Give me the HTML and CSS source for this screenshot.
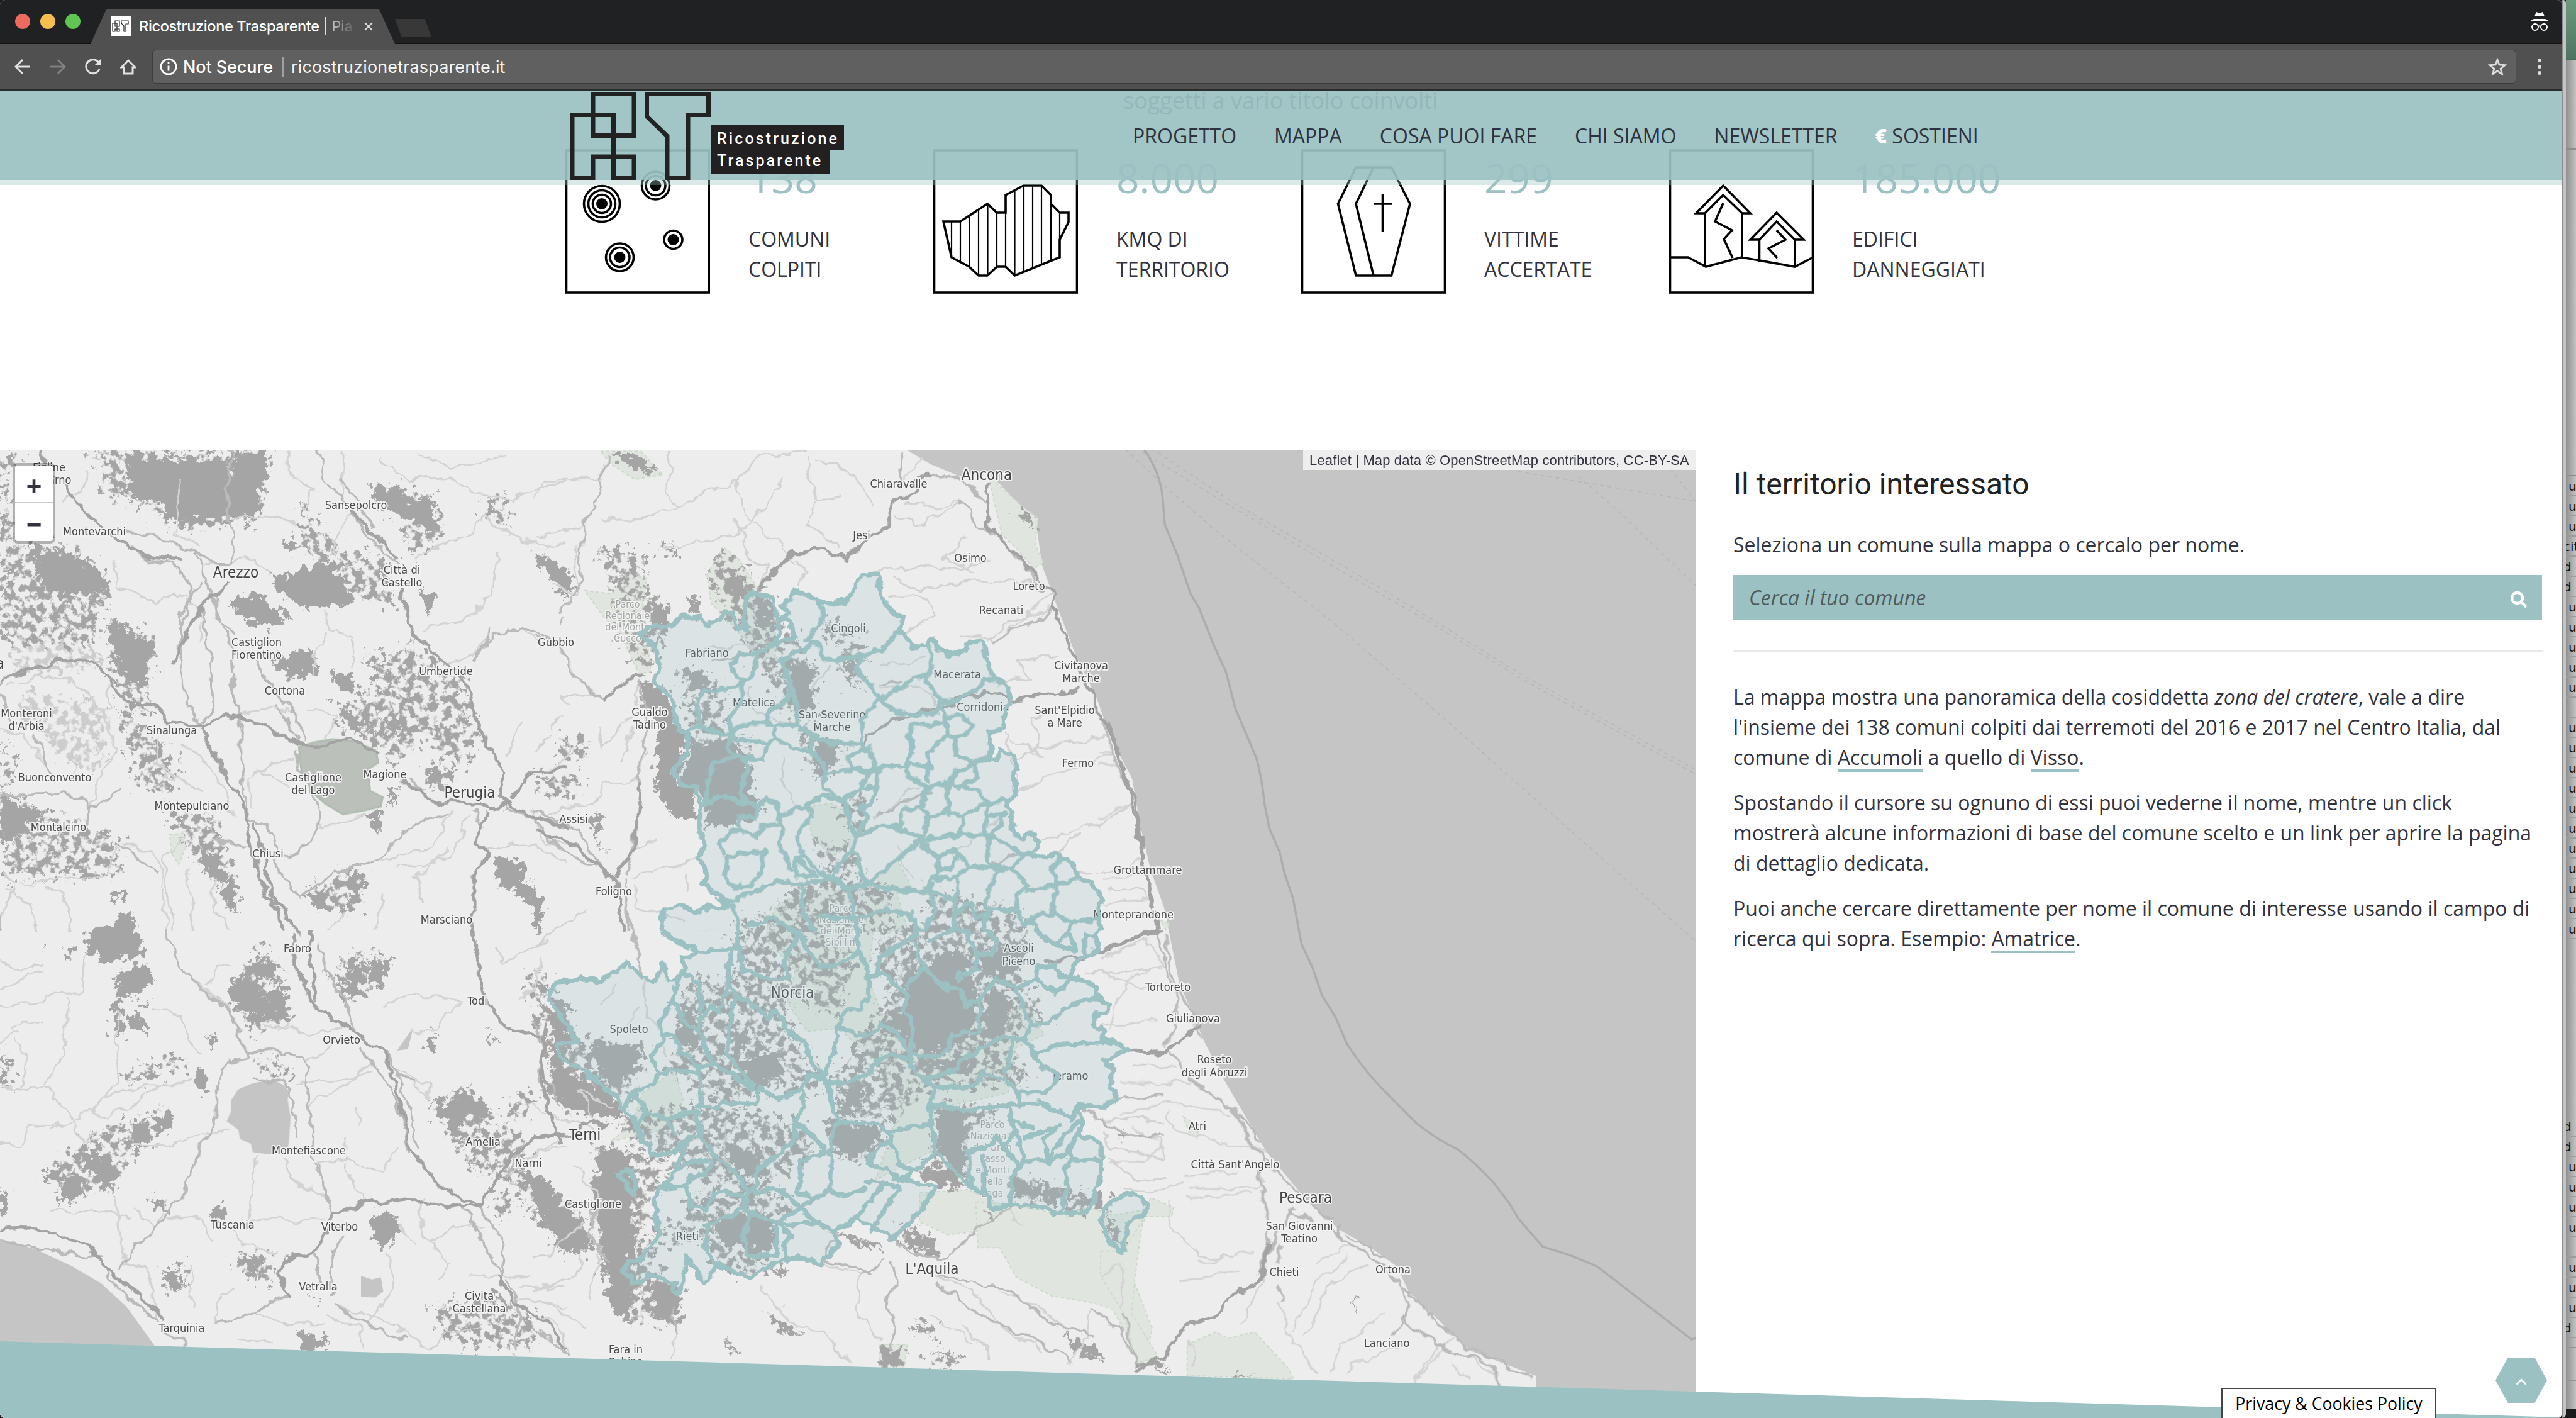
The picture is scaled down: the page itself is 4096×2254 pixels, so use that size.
FILE: index.html
```html
<!DOCTYPE html>
<html lang="it">
<head>
<meta charset="utf-8">
<title>Ricostruzione Trasparente</title>
<link rel="stylesheet" href="styles.css">
</head>
<body>
<div class="desktop">
<div class="window">
  <div class="tabbar">
    <div class="lights"><i class="red"></i><i class="yellow"></i><i class="green"></i></div>
    <div class="tab">
      <svg class="tab-shape" viewBox="0 0 484 56"><path d="M0 56L24 3Q26 0 30 0H454Q458 0 460 3L484 56Z"/></svg>
      <svg class="favicon" viewBox="0 0 32 32"><rect width="32" height="32" fill="#fff"/><path d="M7 7h7v9H7zM3 11h7v13h4v-4H7v4H3zM17 7h11v5h-4v12h-3v-9l-4-4z" fill="none" stroke="#222" stroke-width="1.2"/></svg>
      <span class="tab-title">Ricostruzione Trasparente <b>| Pia</b></span>
      <svg class="tab-close" viewBox="0 0 16 16"><path d="M2 2L14 14M14 2L2 14"/></svg>
    </div>
    <div class="newtab"></div>
    <svg class="incognito" viewBox="0 0 32 30"><path d="M8 7L11 0l5 2 5-2 3 7zM0 15l7-4h18l7 4z" fill="#fff"/><g fill="none" stroke="#fff" stroke-width="2"><circle cx="9" cy="24" r="5"/><circle cx="23" cy="24" r="5"/><path d="M14 23q2-1.500 4 0"/></g></svg>
  </div>
  <div class="toolbar">
    <svg class="ico back" viewBox="0 0 26 26"><path d="M25 13H2M13 2L2 13l11 11"/></svg>
    <svg class="ico fwd" viewBox="0 0 26 26"><path d="M1 13h23M13 2l11 11-11 11"/></svg>
    <svg class="ico reload" viewBox="0 0 26 26"><path d="M22 6.500A11 11 0 1 0 23 17"/><path class="solid" d="M26 0v11H15z"/></svg>
    <svg class="ico home" viewBox="0 0 26 26"><path d="M13 3L2 14h4v10h14V14h4z"/></svg>
    <div class="omnibox">
      <svg class="info" viewBox="0 0 28 28"><circle cx="14" cy="14" r="12"/><path d="M14 12.500v8M14 7v3"/></svg>
      <span class="notsecure">Not Secure</span><span class="sep"></span><span class="url">ricostruzionetrasparente.it</span>
      <svg class="star" viewBox="0 0 30 28"><path d="M15 3l3 8 9 .6-7 5.600 2.500 8.600-7.500-5-7.500 5L10 17.200 3 11.600l9-.6z"/></svg>
    </div>
    <div class="menu"><i></i><i></i><i></i></div>
  </div>
  <div class="viewport">
    <p class="lead">soggetti a vario titolo coinvolti</p>
    <div class="stats">
      <div class="stat">
        <svg viewBox="0 0 230 230"><rect x="1.500" y="2" width="227" height="226"/>
          <circle cx="58" cy="87" r="28.500"/><circle cx="58" cy="87" r="21.500"/><circle cx="58" cy="87" r="14.500"/><circle class="dot" cx="58" cy="87" r="9"/>
          <circle cx="143.500" cy="58" r="22"/><circle cx="143.500" cy="58" r="15.500"/><circle class="dot" cx="143.500" cy="58" r="9"/>
          <circle cx="171.500" cy="144" r="14.500"/><circle class="dot" cx="171.500" cy="144" r="9"/>
          <circle cx="86.500" cy="172" r="22"/><circle cx="86.500" cy="172" r="15.500"/><circle class="dot" cx="86.500" cy="172" r="9"/></svg>
        <div><div class="num">138</div><div class="cap">COMUNI<br>COLPITI</div></div>
      </div>
      <div class="stat">
        <svg viewBox="0 0 230 230"><defs><clipPath id="area"><path d="M16 115H43L86 87 101 101H115V73L143.500 58H172L187 73V87L201 101H215V116L201 144V172L129.500 201 115 187H101L86 201H72L57 187 29 172Z"/></clipPath></defs><rect x="1.500" y="2" width="227" height="226"/>
          <path clip-path="url(#area)" stroke-width="2.200" d="M29 50V210M43 50V210M57.600 50V210M72 50V210M86.500 50V210M101 50V210M115 50V210M129.500 50V210M144 50V210M158 50V210M172 50V210M187 50V210M201 50V210"/>
          <path d="M16 115H43L86 87 101 101H115V73L143.500 58H172L187 73V87L201 101H215V116L201 144V172L129.500 201 115 187H101L86 201H72L57 187 29 172Z"/></svg>
        <div><div class="num">8.000</div><div class="cap">KMQ DI<br>TERRITORIO</div></div>
      </div>
      <div class="stat">
        <svg viewBox="0 0 230 230"><rect x="1.500" y="2" width="227" height="226"/><path d="M87 29H143.500L173 87 143.500 201H87L58.500 87ZM115 29L87 87 115 201M129.500 72V131M115 87H144"/></svg>
        <div><div class="num">299</div><div class="cap">VITTIME<br>ACCERTATE</div></div>
      </div>
      <div class="stat">
        <svg viewBox="0 0 230 230"><rect x="1.500" y="2" width="227" height="226"/><path d="M0 172H30L58.500 187 115 172 200 187 229 172M86 58L129 102H116L86 73 57 102H43ZM57 102V187M116 102V172M86 86L73 115 100 129 87 143 101 173M171 101L214 144H200L171 115 143.500 144H129ZM143.500 144V179M200 144V187M171 129L185 144 158 158 172 173"/></svg>
        <div><div class="num">185.000</div><div class="cap">EDIFICI<br>DANNEGGIATI</div></div>
      </div>
    </div>

    <div class="maprow">
      <div class="mapbox">
      <svg class="map" viewBox="0 716 2696 1538">
        <defs>
          <filter id="rough" filterUnits="userSpaceOnUse" x="0" y="716" width="2696" height="1538" color-interpolation-filters="sRGB"><feTurbulence type="fractalNoise" baseFrequency=".035" numOctaves="3" seed="4"/><feDisplacementMap in="SourceGraphic" scale="22" xChannelSelector="R" yChannelSelector="G"/></filter>
          <filter id="jag" filterUnits="userSpaceOnUse" x="0" y="716" width="2696" height="1538" color-interpolation-filters="sRGB"><feTurbulence type="fractalNoise" baseFrequency=".08" numOctaves="4" seed="9" result="n"/><feDisplacementMap in="SourceGraphic" in2="n" scale="36" xChannelSelector="R" yChannelSelector="G"/></filter>
          <filter id="speck" filterUnits="userSpaceOnUse" x="0" y="716" width="2696" height="1538" color-interpolation-filters="sRGB"><feTurbulence type="fractalNoise" baseFrequency=".085" numOctaves="4" seed="21" result="n"/><feColorMatrix in="n" type="matrix" values="0 0 0 0 0  0 0 0 0 0  0 0 0 0 0  9 0 0 0 -4.050" result="m"/><feDisplacementMap in="SourceGraphic" in2="n" scale="60" xChannelSelector="G" yChannelSelector="B" result="d"/><feComposite in="d" in2="m" operator="in"/></filter>
          <filter id="bound" filterUnits="userSpaceOnUse" x="0" y="716" width="2696" height="1538" color-interpolation-filters="sRGB"><feTurbulence type="fractalNoise" baseFrequency=".07" numOctaves="2" seed="7"/><feDisplacementMap in="SourceGraphic" scale="13" xChannelSelector="R" yChannelSelector="G"/></filter>
        </defs>
        <rect class="land" x="0" y="716" width="2696" height="1538"/>
        <g class="sea">
          <path d="M1443 716L1480 738 1526 757 1571 750 1609 790 1647 829 1657 899 1679 959 1711 1043 1743 1108 1768 1177 1800 1237 1813 1312 1829 1381 1851 1443 1875 1562 1915 1656 1946 1716 2013 1830 2074 1904 2130 1955 2179 1983 2221 2013 2240 2053 2286 2097 2338 2147 2442 2187 2445 2254H2696V716Z"/>
          <path d="M0 1969L57 1986 115 2013 161 2040 201 2077 230 2117 250 2145V2200H0Z"/>
        </g>
        <g class="offshore" transform="translate(1750 700) scale(.6122 .9911)">
          <path class="limit" d="M110 12Q150 45 160 85L167 135 200 185 233 245 255 268 295 330 325 370 350 430 405 510Q420 545 425 580L438 622 465 660 478 695 500 735 522 808 550 845 575 890 610 925 640 968Q690 1015 740 1045L820 1095Q870 1120 930 1138 975 1160 1020 1190L1060 1222 1085 1248 1148 1293 1220 1307 1290 1325 1535 1442 1546 1440"/>
          <path d="M65 15L170 75 300 145 600 290 900 450 1100 560 1545 803M90 12L350 110 640 215 850 290 1100 385 1545 535M150 20L350 102 640 205 850 283 1100 378 1545 528M1085 50L1300 72 1546 98M1240 58L1330 105 1546 233M1480 45L1546 98"/>
        </g>

        <g class="parks">
          <g transform="translate(850 700) scale(.6378 .4974)"><path d="M1130 110L1180 170 1215 210 1255 250 1248 330 1268 390 1245 410 1205 350 1165 300 1150 220ZM125 480L190 490 235 430 280 440 270 520 290 740 260 745 215 620 170 560ZM165 35H265L320 110 250 125 190 75ZM430 430L470 340 510 380 560 480 600 560 600 700 560 690 500 600 440 520ZM680 1170L740 1160 780 1190 800 1290 740 1330 690 1260ZM850 1400L905 1340 940 1430 880 1440ZM670 1440L900 1430 930 1568H580L600 1490Z"/></g>
          <g transform="translate(850 1450) scale(.6378 .5128)"><path d="M580 10H850L830 200 870 330 1230 300 1270 380 1200 420 1180 560 1000 610 990 740 850 830 900 650 860 480 760 360 680 370 630 280 650 180 580 90ZM1100 900L1190 905 1300 935 1385 915 1440 940 1530 920 1480 1100 1540 1290 1520 1400 1440 1230 1390 1210 1290 1190 1200 1130 1160 1040 1105 1040ZM960 870L1080 860 1170 910 1100 990 1030 1000 960 960ZM270 560L350 490 370 580 340 670 190 710 240 660ZM860 1340L930 1340 920 1420 860 1410Z"/></g>
          <g transform="translate(1750 700) scale(.6122 .9911)"><path d="M0 1300L60 1300 110 1250 130 1215 190 1230 185 1245 110 1245 90 1340 80 1400 150 1470 95 1480 60 1400 0 1340ZM225 1450L300 1430 330 1440 400 1430 490 1490 500 1505 225 1500ZM215 1085L255 1100 250 1120 230 1110ZM155 770L180 775 170 785Z"/></g>
          <g transform="translate(0 700) scale(.574 .4974)"><path d="M470 1260L510 1255 515 1300 495 1355 475 1320Z"/></g>
        </g>

        <g class="woods speckled">
          <g transform="translate(0 700) scale(.574 .4974)"><path d="M0 40L60 60 20 110 40 330 150 330 230 370 300 440 300 500 270 600 240 660 100 650 0 640ZM250 30H750L720 250 520 290 380 200 300 180ZM300 560L440 640 410 760 420 880 350 850 310 740ZM830 170L860 240 950 360 1060 370 1100 520 1000 520 830 330ZM1030 140L1110 150 1200 180 1230 300 1140 370 1110 250 1040 220ZM1340 190L1400 180 1420 280 1350 230ZM1010 690L1100 680 1130 640 1200 700 1280 770 1330 960 1270 1060 1180 950 1100 1030 940 900 930 840 1060 780 1030 740ZM0 950L60 1040 0 1130ZM0 1130L130 1190 330 1270 330 1390 20 1400ZM330 850L480 1000 480 1150 380 1100ZM460 1190L600 1200 660 1500 580 1400ZM840 1450L950 1370 1015 1380 990 1510 900 1500ZM1180 1040L1250 1060 1220 1120 1180 1100Z"/><path class="faint" d="M60 800L280 850 300 1000 240 1080 160 1000 50 860ZM40 640L240 660 300 720 40 740Z"/></g>
          <g transform="translate(0 1480) scale(.574 .4936)"><path d="M640 180L720 50 770 120 800 280 690 340ZM950 90L1020 70 1080 100 1060 160 970 210 910 160ZM190 710L280 640 460 580 400 690 320 800 210 860 120 800ZM1190 560L1290 500 1380 620 1470 700 1450 780 1560 900 1560 1040 1500 950 1440 830 1300 760 1240 650ZM1450 130L1540 170 1568 300 1568 600 1500 350ZM1200 1210L1380 1170 1490 1250 1480 1340 1230 1330ZM700 410L800 430 800 470 700 430ZM450 1090L520 1070 510 1160 460 1150ZM640 1050L750 1040 750 1150 690 1110ZM0 380L40 420 30 520 0 480ZM1370 830L1440 860 1400 930 1350 890ZM1420 520L1490 540 1460 600 1410 600ZM340 470L380 430 500 400 520 430 360 490Z"/></g>
          <g transform="translate(850 700) scale(.6378 .4974)"><path d="M150 350L285 350 270 480 330 520 330 600 280 740 200 620 190 450ZM430 420L470 340 560 480 700 720 690 880 720 1010 760 980 760 1040 690 1080 660 900 600 800 500 600ZM730 550L820 660 810 790 770 760 770 660 720 600ZM355 720L450 760 480 930 540 990 550 1040 380 1000 380 800ZM320 330L355 330 350 370 325 360ZM60 960L140 960 120 1020 60 1010ZM0 1060L120 1080 90 1150 10 1120ZM760 1150L840 1130 830 1240 790 1260ZM680 1280L790 1300 820 1390 760 1400 720 1360ZM670 1400L890 1430 870 1568H560L600 1490ZM970 1430L1200 1500 1180 1568H990Z"/></g>
          <g transform="translate(850 1450) scale(.6378 .5128)"><path d="M580 0L720 0 800 160 760 330 620 240 660 420 720 520 700 560 560 550 480 620 420 560 320 480 380 420 350 300 400 200 500 200 490 50ZM860 40L1240 20 1200 160 1270 340 1180 400 1240 540 1060 540 960 560 900 650 760 640 740 520 820 380 880 250 850 150ZM10 180L120 400 280 430 240 560 200 640 130 620 40 550 60 450 30 330ZM200 620L420 600 560 620 660 650 700 750 560 850 440 840 300 740 230 700ZM150 720L270 740 350 780 300 870 270 1000 330 1150 360 1270 240 1270 180 1130 150 900ZM0 830L90 900 140 1040 90 1060 0 900ZM380 870L560 840 660 900 560 980 600 1060 540 1130 440 1080 420 1000 290 1050 240 1140 260 1090 300 980 380 950ZM750 650L880 660 860 740 800 780 740 730ZM1000 600L1180 600 1080 700 1090 850 970 820 1000 740ZM900 970L960 980 1000 1060 940 1050ZM1180 820L1440 890 1410 930 1200 890ZM980 1350L1060 1380 1030 1420 980 1400ZM950 1270L1010 1280 990 1320 950 1300Z"/></g>
        </g>
        <g class="woods" filter="url(#jag)">
          <g transform="translate(0 700) scale(.574 .4974)"><path d="M350 60L600 60 640 100 650 40 735 35 745 120 720 130 710 250 660 240 560 250 500 270 430 190 360 190ZM80 340L230 380 300 450 270 500 130 490ZM290 580L430 650 400 740 410 800 350 760 320 700ZM750 440L790 430 850 400 920 380 930 430 980 490 960 530 850 540 780 490ZM780 320L820 320 800 370ZM630 510L720 490 800 570 740 600 660 570ZM750 700L830 670 885 690 870 750 800 760ZM1030 150L1110 150 1120 200 1200 180 1200 240 1230 300 1150 270 1050 200ZM1480 370L1568 440V510ZM920 740L985 760 980 810 925 780ZM945 860L1000 900 1050 940 960 910ZM1065 880L1105 900 1100 960ZM1160 470L1210 500 1190 560ZM1185 1050L1250 1060 1230 1110 1185 1100ZM1365 1330L1465 1350 1440 1400 1500 1450 1505 1520 1430 1450 1370 1400ZM0 1140L130 1190 60 1250 10 1290ZM560 1270L600 1340 655 1440 655 1515 620 1470 620 1410 560 1370ZM840 1450L920 1440 880 1500ZM960 1380L1010 1390 980 1490ZM1010 1190L1050 1180 1050 1270ZM250 1568L370 1510 380 1568ZM310 1450L355 1440 350 1480ZM1080 1120L1110 1100 1080 1170Z"/></g>
          <g transform="translate(0 1480) scale(.574 .4936)"><path d="M240 0H380L400 70 290 105 240 60ZM325 130L400 110 430 150 380 210 325 210ZM375 230L420 230 390 245ZM360 270L400 280 405 330 365 310ZM310 230L330 220 345 330 315 340ZM680 110L720 90 765 110 760 155 700 150ZM635 170L690 150 740 230 760 180 800 195 800 280 725 280 690 340 700 270 640 240ZM920 140L970 190 960 110 1000 130 1020 70 1010 150 1000 200 965 220ZM1020 95L1080 100 1060 165 1025 155ZM1180 350L1205 320 1210 390 1180 385ZM535 460L565 445 585 520 545 510ZM570 345L595 340 590 380ZM370 620L420 620 415 695 370 690ZM430 600L480 590 475 630 430 655ZM200 715L250 700 330 770 305 840ZM130 770L190 780 240 830 225 855 160 875 180 810 125 800ZM415 850L465 880 460 915 420 880ZM585 900L615 880 630 920 585 930ZM0 820L20 840 20 890 0 920ZM1190 550L1250 560 1285 500 1355 570 1360 610 1290 570 1270 680 1230 600ZM1530 250L1568 220V570L1530 510ZM1440 770L1520 800 1568 900V1040L1500 920ZM1030 910L1090 910 1105 990 1060 1020 1035 970ZM460 1100L500 1100 500 1160 470 1150ZM665 1050L730 1060 700 1120ZM850 1290L910 1320 900 1350 850 1350 820 1300ZM845 1170L885 1180 870 1200ZM110 40L130 45 120 65ZM175 60L205 60 200 100ZM1345 320L1380 350 1350 360Z"/></g>
          <g transform="translate(850 700) scale(.6378 .4974)"><path d="M10 350L90 430 100 490 40 440 5 370ZM290 510L330 520 330 610 290 600ZM265 760L330 800 350 900 380 940 375 1020 350 1060 360 1100 400 1110 410 1210 350 1210 300 1110 310 920 270 850ZM390 970L490 970 540 1040 545 1130 575 1170 540 1210 430 1240 420 1130 360 1100ZM620 700L690 730 690 860 650 880 640 760ZM700 950L760 960 750 1050 700 1080ZM770 690L810 720 790 780ZM380 490L415 510 415 570 385 540ZM720 570L755 650 730 630ZM140 1190L180 1200 155 1240 160 1290 185 1320 140 1250ZM190 40L250 40 310 110 240 90ZM1205 220L1245 250 1240 280 1200 240ZM810 1430L890 1440 860 1460ZM0 1400L20 1568H0ZM360 730L430 740 430 800 390 790ZM470 400L510 430 540 520 500 500ZM560 500L590 520 590 580 560 620Z"/></g>
          <g transform="translate(850 1450) scale(.6378 .5128)"><path d="M30 310L80 350 100 410 50 410ZM50 500L130 510 190 560 215 635 90 620 45 560ZM140 400L270 410 250 500 190 530 140 450ZM160 740L230 740 250 900 240 1270 190 1230 170 1090 150 860ZM290 1140L370 1160 360 1270 300 1260ZM30 930L120 940 140 1040 80 1060ZM930 190L1060 110 1100 210 1100 380 980 450 930 400 920 250ZM880 300L940 310 940 400 880 360ZM1130 240L1190 270 1170 380 1110 410ZM960 450L1090 450 1080 500 970 480ZM1010 610L1080 610 1070 740 1080 840 1000 740ZM960 790L1050 790 1060 860 970 840ZM720 650L850 660 870 710 790 760 740 730ZM480 460L600 440 620 500 560 540ZM460 720L560 740 560 830 500 800ZM450 940L570 930 600 1000 590 1050 530 1050 450 1000ZM1180 820L1230 840 1420 890 1430 930 1380 890 1200 880ZM1420 960L1460 990 1465 1040ZM750 990L860 1030 870 1050 760 1010ZM905 990L1000 1010 1000 1060 940 1040ZM1115 930L1145 930 1140 955ZM865 1350L920 1350 910 1410 865 1410ZM950 1275L1000 1290 1000 1315 950 1295ZM985 1360L1060 1380 1050 1395ZM1310 1305L1405 1350 1410 1395 1350 1360ZM570 1240L670 1310 620 1300ZM470 1320L520 1380 490 1370ZM580 1100L630 1110 620 1135ZM370 310L410 310 400 420 340 400ZM480 380L540 360 520 440ZM1100 120L1230 110 1200 190 1120 200ZM770 550L830 540 810 600 760 620Z"/></g>
          <g transform="translate(1750 700) scale(.6122 .9911)"><path d="M10 1235L40 1260 50 1290 20 1275ZM130 1483L180 1495 150 1497ZM340 1495L400 1502 350 1502ZM40 1112L70 1110 60 1118ZM655 1380L670 1375 660 1395Z"/></g>
        </g>
        <g class="lakes">
          <path transform="translate(0 1480) scale(.574 .4936)" d="M700 490L730 483 760 482 785 495 800 515 797 545 805 600 800 680 795 712 740 718 700 712 695 685 665 670 660 640 628 612 640 580 640 545 660 510Z"/>
          <path transform="translate(0 1480) scale(.574 .4936)" d="M1145 310L1130 380 1100 385 1120 350ZM1000 1110L1030 1122 1055 1115 1062 1160 1040 1180 1000 1178Z"/>
          <path class="trasimeno" transform="translate(0 700) scale(.574 .4974)" d="M828 980L870 965 920 955 975 960 1040 990 1048 1030 1020 1050 1025 1120 1060 1140 1055 1170 1000 1185 950 1195 900 1160 870 1130 835 1060Z"/>
        </g>

        <g class="roads" filter="url(#rough)">
          <g class="minor">
            <g transform="translate(0 700) scale(.574 .4974)"><path d="M170 200L230 160 240 100M500 120L480 300 560 330M640 250L720 240 820 260M800 30L800 110 870 160 850 220M940 30L960 100 940 180M980 240L920 320 930 370M1050 60L1130 130 1260 120 1300 170 1420 180 1568 130M1160 40L1250 90 1400 40M1300 300L1340 240 1400 300 1520 340 1568 320M1150 380L1220 330 1300 300M1380 360L1350 530 1250 580 1170 600M900 540L910 610 970 620 980 720M900 620L870 700 860 760M1360 600L1320 680 1230 720M1440 600L1500 660M320 380L330 470 430 510 520 490M520 500L560 560 550 640M560 400L700 380 750 430M20 790L100 750 200 770 260 830 300 900 320 1000 270 1080 240 1200M0 920L60 940 130 1050M310 750L300 850 260 880M500 970L560 1010 620 1120 650 1200M440 960L430 1040 480 1080M660 880L760 850 820 880M700 1180L680 1080 820 1010M560 1120L480 1060 420 1040M720 1060L800 1100M340 1290L430 1310 450 1400 460 1568M330 1300L300 1390 180 1400 40 1420 0 1380M580 1270L640 1290 700 1300M500 1280L450 1340 480 1568M880 1190L890 1240 960 1210 1010 1190M1100 1080L1180 1140 1240 1160M1250 1180L1200 1300 1060 1340M1300 1190L1250 1330 1100 1370M1480 1180L1500 1280 1568 1290M1340 1310L1480 1290 1568 1350M1170 1480L1150 1400 1240 1300M0 1520L40 1430M100 1568L80 1480 20 1440M200 1568L180 1450 130 1430M850 860L930 880 900 950M1400 1000L1450 900M1550 880L1480 1000M600 1400L590 1500 640 1568M520 1370L540 1568M1040 1568L1060 1450M900 1568L960 1510"/></g>
            <g transform="translate(0 1480) scale(.574 .4936)"><path d="M0 100L60 130 120 100M0 240L100 230 130 200 220 210 240 60M0 190L120 120M40 320L60 290 120 290M320 250L330 480 250 580M420 250L510 280 520 350 550 400M570 180L600 120 640 110M510 140L560 180 630 250 690 400M0 360L60 320M60 500L70 400 40 350M0 500L130 510 200 600M120 500L180 400 190 220M280 540L400 490 530 490M130 640L250 580 300 610 440 490M0 690L60 690 80 640 160 620M200 610L230 680 280 640M320 850L330 1000 350 1060M150 910L260 900 360 930M370 900L430 960 460 860M460 920L560 930 590 1000M690 930L820 930 900 920M650 970L670 1010 770 1040M710 720L700 840 680 930M370 690L480 690 560 660M600 650L560 660 640 640M780 310L800 300M730 310L780 300 850 330 950 310M860 560L870 540 960 500 1030 420M880 750L960 740 1060 780 1100 700M960 660L960 740M780 740L830 820 900 850M1010 870L980 830 960 750M1180 860L1160 920 1190 1000 1240 1080 1210 1120M1190 1000L1260 940 1340 960M1110 940L1150 1020M1150 480L1190 550 1190 490 1080 440M1000 620L980 560M840 420L900 400 920 370M820 490L960 480 1030 450M1280 230L1200 320 1140 320M1060 240L1120 210 1220 210 1280 230M1400 800L1500 700 1568 690M1400 1110L1460 1110M1440 1190L1568 1210M1300 1110L1400 1110M1190 1350L1240 1290 1330 1280M1010 1350L1000 1280 900 1230M930 1200L1100 1280 1190 1350M1070 1040L1090 1120 1060 1200 1020 1260M670 1310L760 1320M600 1260L610 1170 660 1140M530 1210L530 1080M350 1070L400 1080 430 1180 440 1280M700 1230L800 1270 900 1270M1430 1140L1568 1150M1380 60L1400 100 1520 20M1500 90L1480 180 1440 220"/></g>
            <g transform="translate(850 700) scale(.6378 .4974)"><path d="M0 310L80 290 130 260M170 120L30 130 0 190M340 40L330 160 360 210M160 250L240 260 350 220 420 180 500 130 560 50 680 35M500 130L530 250 600 320 650 400M620 120L560 230 500 300 330 350M680 50L700 190 680 270 760 350M700 60L800 110 840 210M760 180L700 190M960 60L920 140M920 190L1000 220 1060 190M1060 200L960 270 900 240M850 420L940 400 1060 410 1130 390M900 440L960 480 1040 460 1110 450 1240 450M880 500L960 500 1000 560 930 610M1100 420L1020 380 1080 310M1120 640L1180 580 1290 540M1290 490L1150 640 1060 620M1150 780L1240 760 1200 700 1310 690M1170 930L1260 1010 1240 890 1300 870M1200 1010L1300 980 1430 940M1180 930L1200 1130 1290 1070 1440 1000M1260 1280L1400 1230 1500 1150M1300 1320L1360 1260M1350 1380L1460 1370 1520 1340M1430 1440L1500 1430 1540 1480M40 470L80 480 110 500 100 400 110 330M60 670L110 760 170 830M80 850L60 820 150 800M160 920L170 990 240 880 260 780M220 1030L240 920M0 1060L60 1040 90 980 60 960M0 1210L70 1180 150 1160 170 1100 260 1080 280 990M310 1280L250 1300M250 1400L380 1350 420 1300M250 1410L260 1500 380 1540M380 1380L380 1450M400 680L500 650 560 660M540 780L540 860 620 900M620 1010L620 1100 660 1180M860 800L960 780 1030 880M960 1100L880 1180 850 1200M860 720L930 710 980 690M740 720L690 800M570 450L590 400 540 380 500 250M650 460L680 420 650 380M1040 1320L1090 1290 1160 1190M900 1290L940 1400"/></g>
            <g transform="translate(850 1450) scale(.6378 .5128)"><path d="M0 100L50 50 130 0M1500 100L1440 130 1380 110M1380 180L1450 190 1568 170M1450 270L1430 370M1400 640L1500 640 1568 650M1420 670L1440 730 1568 760M1430 760L1500 830 1568 830M0 600L60 640 160 680M140 650L120 560 200 600M0 740L60 710M0 1070L60 1040 120 960M0 1170L100 1130 110 1060M0 1210L60 1230 130 1280M0 1250L60 1280 90 1380M350 1270L340 1390M560 1160L640 1270 720 1300 780 1390M810 1120L800 1250 860 1320M720 1090L810 1120M1000 1130L1100 1180 1170 1290 1260 1360M1170 1180L1240 1210 1330 1290M1380 1230L1380 1320 1330 1400M1220 980L1180 930M1060 1280L1130 1340 1130 1400M980 1250L1100 1330M160 280L210 230M270 200L280 320 310 360 330 450M230 350L260 300M480 640L480 800M100 780L150 870 150 960M170 1040L130 1200"/></g>
            <g transform="translate(1750 700) scale(.6122 .9911)"><path d="M0 500L30 500M0 520L60 520M0 605L80 580M0 705L100 690M10 745L130 735M0 830L120 800 160 840 60 870 0 850M40 905L70 870 150 880M0 940L150 930M80 1000L200 1010M50 1030L230 1030M60 1080L200 1060 340 1080M20 1060L100 1055M170 1080L210 1110 350 1130 430 1140M20 1160L120 1150 160 1130M80 1100L160 1130 165 1150M40 1200L130 1210 210 1190M180 1220L180 1260 260 1310 350 1310M0 1340L60 1320 60 1390M260 1320L390 1300M210 1350L360 1330M220 1180L360 1170M240 1200L410 1200M220 1215L400 1210M420 1190L410 1160M460 1380L500 1440 540 1480 560 1500M500 1430L560 1350 640 1310M530 1440L600 1350 690 1320M600 1500L620 1450 740 1400M640 1490L780 1450M810 1510L880 1450M820 1505L910 1440M910 1480L960 1510M960 1470L1040 1510M230 1440L240 1490M360 1420L420 1340M640 1290L560 1320"/></g>
          </g>
          <g class="mid">
            <g transform="translate(0 700) scale(.574 .4974)"><path d="M350 290L450 320 530 350 600 390 640 390 650 340 630 260 640 30M360 330L400 380 480 390 530 480 500 620 480 720M540 350L570 440 610 570 640 650 650 850 670 920 670 1100 680 1200 760 1250 770 1330M560 450L500 550 500 680 520 850 560 920M600 500L600 560 650 620M560 540L580 720 590 850 560 910M710 700L720 740 790 830 850 960M770 840L830 970M1550 590L1568 560M1568 650L1440 600 1370 620 1310 700M1360 600L1340 660M980 240L1060 360 1110 400M880 30L900 120 980 230M950 130L1040 280M1400 1180L1568 1230M240 1180L340 1110M0 1130L180 1130 240 1160 240 1240M0 1520V1568M780 1330L830 1320 880 1240 880 1190 860 1120 830 1050 825 990M1240 1190L1110 1250 1060 1330 940 1380 830 1460 790 1400 760 1340M1140 1080L1180 1150M1310 1180L1340 1240M150 1100L90 940M680 1300L590 1270M430 1380L330 1290M10 750L0 800 20 900"/></g>
            <g transform="translate(0 1480) scale(.574 .4936)"><path d="M460 0L500 120 560 190 640 270 690 410 640 420 600 520 600 600 560 690 500 840 430 960 370 1030 340 1090M690 400L760 380 840 410 850 480 860 600 870 740M700 470L790 490 810 540 820 660M1000 370L1090 520 1130 720M1070 390L1110 480 1160 700M870 750L930 910M880 750L900 850 930 900M950 980L920 1050 920 1170M880 1040L880 1130M800 1170L740 1200 690 1240 600 1260M1330 180L1400 320M970 220L950 230 980 320M890 40L900 130 940 190 980 320M1280 890L1390 1110M1320 880L1400 1010 1390 1110M1370 960L1330 900M1450 690L1400 800M0 1000L100 1020 180 1040 280 1050M290 1080L300 1120 430 1250 480 1310 510 1330M930 1200L1000 1260 1130 1320M1400 1120L1440 1200M1440 1210L1420 1340M1500 330L1510 480 1550 560M1150 480L1100 470"/></g>
            <g transform="translate(850 700) scale(.6378 .4974)"><path d="M185 60L160 120 165 170 130 250 110 390 120 460 60 550M0 630L60 650 80 720 170 830M910 30L920 130M990 100L1080 140 1130 200M1060 190L1090 250 1150 310M1160 310L1230 410 1270 490M440 700L520 680M860 790L920 770M260 760L280 900 260 1080 250 1250 230 1390M0 1180L110 1250 170 1370M0 1210L60 1300 160 1370M225 1400L230 1568M1140 1350L1200 1330M860 1190L990 1120M1300 540L1140 640"/></g>
            <g transform="translate(850 1450) scale(.6378 .5128)"><path d="M0 340L20 420 10 520 60 700M230 0L250 110 265 200M850 1110L720 1080 750 990M880 1080L810 1120M880 990L930 1060 1020 1070 1050 1030 1190 920M890 1080L900 1150 880 1200 900 1260 890 1350M1010 1150L1100 1240 1200 1300 1340 1390M1010 1130L1180 1170 1290 1270 1400 1310M1380 1220L1460 1300 1500 1400M350 1220L350 1300M0 1290L60 1350 90 1380M150 900L140 1000 180 1080M1360 600L1440 660 1470 690 1568 700M1440 580L1568 570"/></g>
            <g transform="translate(1750 700) scale(.6122 .9911)"><path d="M0 450L30 500 80 570 100 620 120 700 150 790 170 850 200 890 190 940 170 970M170 790L180 850 230 910 260 960M180 975L240 1030 350 1075 380 1120 440 1160 500 1200 600 1250M350 1075L420 1130M420 1150L410 1180 430 1240 440 1280 420 1340M430 1310L470 1260 510 1230M440 1310L460 1270M460 1320L460 1290M620 1260L620 1280 700 1310 780 1350 800 1390 790 1410 870 1450 1010 1480 1040 1515M640 1275L740 1310M790 1360L870 1415 940 1450 1120 1505M470 1380L460 1350M500 1240L580 1260 620 1280M90 1480L60 1400M760 1440L790 1400"/></g>
          </g>
          <g class="major">
            <g transform="translate(0 700) scale(.574 .4974)"><path d="M115 30L130 80 250 240 320 310 360 340 400 370 500 380M640 450L560 530 500 650 480 720M0 770L60 740 150 710 240 690 300 750 360 850 420 840 470 900 560 920 620 880 700 900 830 970 870 975 970 960 1050 1000M560 920L600 1020 650 1120 680 1200 690 1290 750 1480 790 1568M700 1220L730 1320 760 1480 830 1568M1110 470L1130 590 1200 680 1280 760 1320 880 1350 980 1400 1060 1380 1140 1410 1170 1568 1240M1410 1150L1480 1060 1568 1045M1240 1160L1410 1170M1110 1080L1190 1150 1240 1160M1350 1180L1320 1280 1350 1330 1310 1400 1310 1568M1100 380L980 230"/></g>
            <g transform="translate(0 1480) scale(.574 .4936)"><path d="M810 0L820 100 860 230 960 310 1070 400 1100 520 1130 700 1170 760 1260 850 1330 880 1400 760 1440 710 1500 660 1568 650M860 0L860 60 870 230M1310 0L1330 100 1330 180 1400 310 1500 340M1510 340L1500 500 1530 610 1550 680M1330 880L1240 890 1130 860 1000 880 930 910 870 1040 790 1060 780 1110 800 1180M0 960L130 960 230 1010 290 1080 370 1160 460 1250M1380 1110L1430 1200 1520 1270 1568 1350"/></g>
            <g transform="translate(850 700) scale(.6378 .4974)"><path d="M990 100L940 160 900 190 880 260 840 310 780 375 720 355 650 355 560 470M1130 130L1130 280 1200 360 1290 490 1300 560 1370 770 1420 900 1460 1020 1500 1150 1520 1350 1550 1568M1360 790L1200 830 1130 800 1080 820 990 860 900 890 830 940 820 990M0 1240L100 1290 200 1410 220 1568M170 830L230 770 270 740M200 1400L250 1300 260 1090"/></g>
            <g transform="translate(850 1450) scale(.6378 .5128)"><path d="M1568 50L1440 110 1350 150 1270 160M1568 430L1480 425M110 690L130 650 180 660M0 700L110 690M1568 1400L1500 1400M30 340L20 420 30 560"/></g>
            <g transform="translate(1750 700) scale(.6122 .9911)"><path d="M0 818L80 800 150 785M20 450L80 575 115 680 150 780M60 978L175 975 260 940M90 1490L160 1470 220 1420 300 1405 350 1370 430 1335 440 1290"/></g>
          </g>
        </g>
        <g class="labels">
          <text x="78" y="749">Figline</text><text x="78" y="769">Valdarno</text><text x="566" y="809">Sansepolcro</text><text x="150" y="851">Montevarchi</text><text class="city" x="375" y="918">Arezzo</text>
          <text x="639" y="912">Città di</text><text x="639" y="932">Castello</text><text x="408" y="1027">Castiglion</text><text x="408" y="1047">Fiorentino</text><text x="453" y="1104">Cortona</text><text x="709" y="1073">Umbertide</text>
          <text x="42" y="1140">Monteroni</text><text x="42" y="1160">d'Arbia</text><text x="273" y="1167">Sinalunga</text><text x="87" y="1242">Buonconvento</text><text x="498" y="1242">Castiglione</text><text x="498" y="1262">del Lago</text><text x="612" y="1237">Magione</text><text class="city" x="747" y="1268">Perugia</text>
          <text x="305" y="1287">Montepulciano</text><text x="93" y="1321">Montalcino</text><text x="426" y="1363">Chiusi</text><text x="710" y="1468">Marsciano</text><text class="city" x="0" y="1063">a</text>
          <text x="473" y="1514">Fabro</text><text x="759" y="1597">Todi</text><text x="543" y="1659">Orvieto</text><text x="768" y="1821">Amelia</text><text x="840" y="1855">Narni</text><text x="491" y="1835">Montefiascone</text><text x="370" y="1953">Tuscania</text><text x="540" y="1956">Viterbo</text><text x="506" y="2051">Vetralla</text><text x="762" y="2066">Civita</text><text x="762" y="2086">Castellana</text><text x="289" y="2117">Tarquinia</text>
          <text x="1429" y="775">Chiaravalle</text><text class="city" x="1569" y="763">Ancona</text><text x="1370" y="857">Jesi</text><text x="1543" y="893">Osimo</text><text x="1636" y="938">Loreto</text><text x="1592" y="976">Recanati</text><text x="1349" y="1005">Cingoli</text><text x="1719" y="1064">Civitanova</text><text x="1719" y="1084">Marche</text><text x="1522" y="1078">Macerata</text><text x="1563" y="1130">Corridonia</text><text x="1693" y="1135">Sant'Elpidio</text><text x="1693" y="1155">a Mare</text><text x="1714" y="1219">Fermo</text>
          <text x="1124" y="1044">Fabriano</text><text x="1199" y="1123">Matelica</text><text x="1323" y="1142">San Severino</text><text x="1323" y="1162">Marche</text><text x="1033" y="1138">Gualdo</text><text x="1033" y="1158">Tadino</text><text x="884" y="1027">Gubbio</text><text x="912" y="1308">Assisi</text><text x="976" y="1423">Foligno</text>
          <text x="1825" y="1389">Grottammare</text><text x="1802" y="1460">Monteprandone</text><text x="1857" y="1575">Tortoreto</text><text x="1897" y="1625">Giulianova</text><text x="1931" y="1690">Roseto</text><text x="1931" y="1711">degli Abruzzi</text><text x="1904" y="1796">Atri</text><text x="1964" y="1857">Città Sant'Angelo</text><text class="city" x="2076" y="1912">Pescara</text><text x="2066" y="1955">San Giovanni</text><text x="2066" y="1975">Teatino</text><text x="2042" y="2028">Chieti</text><text x="2215" y="2024">Ortona</text><text x="2205" y="2141">Lanciano</text>
          <text x="1620" y="1513">Ascoli</text><text x="1620" y="1534">Piceno</text><text class="city" x="1260" y="1586">Norcia</text><text x="1000" y="1642">Spoleto</text><text x="1701" y="1716">Teramo</text><text class="city" x="930" y="1812">Terni</text><text x="943" y="1920">Castiglione</text><text x="1093" y="1971">Rieti</text><text class="city" x="1482" y="2025">L'Aquila</text><text x="995" y="2151">Fara in</text><text x="995" y="2171">Sabina</text>
          <g class="park"><text x="998" y="966">Parco</text><text x="998" y="984">Regionale</text><text x="998" y="1002">del Monte</text><text x="998" y="1020">Cucco</text><text x="1338" y="1449">Parco</text><text x="1338" y="1467">Nazionale</text><text x="1338" y="1485">dei Monti</text><text x="1338" y="1503">Sibillini</text><text x="1578" y="1793">Parco</text><text x="1578" y="1811">Nazionale</text><text x="1578" y="1829">del Gran</text><text x="1578" y="1847">Sasso</text><text x="1578" y="1865">e Monti</text><text x="1578" y="1883">della</text><text x="1578" y="1902">Laga</text></g>
        </g>

        <g class="comuni" filter="url(#bound)">
          <g class="area">
            <path transform="translate(850 700) scale(.6378 .4974)" d="M320 1568L315 1535 325 1500 365 1485 400 1505 440 1490 455 1500 480 1490 470 1465 420 1420 430 1390 410 1330 425 1290 410 1240 415 1165 400 1105 360 1100 345 1060 378 1000 382 935 360 925 350 880 340 820 298 778 312 730 305 670 262 617 297 592 340 595 368 557 385 570 415 565 428 600 440 578 465 570 475 548 495 555 505 600 530 605 520 570 530 500 545 488 595 505 605 560 610 600 600 650 648 630 635 575 618 570 632 550 618 525 640 505 645 478 680 492 715 520 778 515 795 480 815 430 858 425 862 490 890 545 918 565 910 605 945 660 980 655 990 632 1010 670 1040 685 1070 675 1085 642 1112 642 1125 665 1125 690 1145 760 1175 785 1192 825 1172 860 1168 925 1135 930 1138 985 1130 1020 1155 1020 1160 990 1198 1010 1203 1050 1195 1060 1200 1110 1195 1135 1180 1160 1190 1215 1195 1250 1215 1280 1225 1262 1243 1260 1258 1280 1245 1310 1220 1325 1270 1330 1300 1320 1340 1350 1355 1395 1390 1415 1405 1450 1418 1475 1405 1500 1412 1540 1410 1568"/>
            <path transform="translate(850 1450) scale(.6378 .5128)" d="M1410 58L1395 70 1408 120 1350 150 1340 200 1400 230 1402 262 1435 290 1425 310 1393 320 1395 355 1418 362 1420 400 1440 398 1480 427 1420 462 1443 485 1432 540 1455 580 1418 605 1355 600 1365 655 1362 690 1412 712 1415 790 1390 915 1375 930 1300 935 1260 915 1185 905 1170 915 1135 915 1135 885 1085 850 1045 800 1000 745 960 790 915 830 960 840 1003 850 975 905 930 970 885 1015 880 1000 800 950 745 990 758 1030 712 1090 655 1070 620 1080 590 1095 535 1133 490 1110 455 1100 425 1150 405 1120 380 1065 372 1130 360 1185 345 1175 350 1150 285 1125 248 1150 222 1110 235 1085 265 1075 310 1000 298 905 310 855 325 850 350 800 380 705 345 745 290 752 288 720 268 712 250 650 220 610 205 570 150 515 100 475 62 450 60 410 105 400 80 350 45 290 35 250 60 215 130 205 165 215 232 155 265 200 300 215 322 160 335 210 355 210 375 175 365 145 400 130 395 110 335 80 320 58"/>
            <path transform="translate(850 1450) scale(.6378 .5128)" d="M1480 870L1510 885 1532 910 1520 940 1480 960 1465 1055 1435 1020 1412 970 1415 930 1440 895ZM205 812L240 798 255 850 245 878 225 840Z"/>
          </g>
          <g class="line">
            <path transform="translate(850 700) scale(.6378 .4974)" d="M715 520L722 560 680 640 710 655 720 700 745 705 815 685 865 670 910 605M690 655L615 700 630 760 650 830 655 910 700 945 740 970 815 968M600 650L560 680 510 685 492 720 500 750 518 770 545 740 560 680M518 770L515 840 485 880 490 940M515 785L450 800 425 800 405 825 412 900 415 920 490 940M380 935L410 905M815 680L800 730 830 770 840 790 862 825 890 860 940 880 1000 870 1015 830 975 770 990 720 985 660M862 825L900 800 940 765 990 740M1015 840L1050 830 1115 785 1120 765 1150 765M862 825L815 890 818 980 835 990 850 1045M1015 850L1025 900 1030 940 1045 950 1050 1010 1090 1030 1130 1015M940 910L1015 905M940 910L930 940 945 990 925 1030 990 1045M1025 890L1060 875 1095 910 1080 935 1045 950M1030 940L980 1000 980 1090M835 980L780 1010 790 1050 825 1060 850 1045 930 1040M725 1065L790 1050M695 1000L720 1030 725 1065 720 1110 770 1150 815 1110 825 1070 860 1050 850 1110 815 1110M490 940L510 915 550 905 650 910M490 940L505 960 580 965 600 955 600 920M580 905L590 860 630 830 640 790 630 740M600 955L650 985 690 990 690 940M490 940L480 980 500 1010 525 1020 530 1060 515 1110 525 1160 560 1170 580 1140 605 1165 610 1200 690 1160 720 1135 770 1155M500 1010L445 1030 435 1080 425 1160 470 1135 525 1160M505 1010L570 1020 580 975M610 1200L620 1240 610 1290 640 1370M680 1170L690 1200 655 1260 660 1310 710 1380 740 1400M770 1155L800 1270 795 1310 820 1400 840 1420M850 1110L840 1160 815 1170 830 1210 800 1270M800 1270L860 1230 910 1240 920 1180 970 1170 975 1110 930 1070 925 1030M910 1240L970 1270 980 1210 965 1180M975 1110L1030 1095 1050 1060 1100 1030M1050 1060L1040 1100 1110 1120 1130 1160 1180 1150M1100 1030L1100 1080 1070 1100M1030 1100L1030 1180 980 1210M1030 1190L1070 1200 1120 1165M1070 1200L1060 1260 970 1275 970 1300 1010 1330M1060 1260L1120 1260 1130 1165M1130 1200L1170 1190 1160 1230 1140 1260M1120 1260L1180 1290 1220 1325 1190 1370 1160 1370 1130 1350 1130 1270M1160 1370L1080 1360 1050 1310 1000 1330 1010 1370 1040 1370 1055 1320M1080 1360L1050 1400 1055 1460 1045 1510M1190 1370L1230 1420 1205 1450 1200 1500 1130 1500M1160 1370L1130 1440 1125 1500M1230 1440L1300 1420 1300 1390 1285 1370 1310 1340M1300 1420L1340 1410 1355 1395M1300 1420L1290 1510 1340 1540M970 1270L900 1340 830 1420 790 1430 740 1400 760 1350 795 1310M970 1275L980 1310 1000 1330M1000 1400L1010 1370M840 1415L880 1435 985 1440 1000 1500 970 1568M985 1440L990 1400 1050 1400M480 1330L575 1310 565 1380 540 1420 500 1430 475 1400 480 1330M460 1290L490 1250 510 1250M510 1200L550 1210 560 1170M510 1200L510 1245 550 1265 570 1230 615 1225M460 1290L470 1320M655 1340L700 1390 655 1395 650 1350 670 1330M480 1480L550 1440 610 1410 665 1420 740 1400M480 1470L500 1500 510 1568M740 1400L785 1440 800 1530 870 1500 940 1520 960 1568M665 1420L670 1510 700 1568M800 1530L710 1520M985 1440L1050 1470 1045 1568M1045 1510L1090 1480 1100 1530 1130 1510M1200 1500L1220 1550 1260 1510 1290 1520M1405 1530L1340 1540"/>
            <path transform="translate(850 1450) scale(.6378 .5128)" d="M510 60L500 110 440 120 410 125M510 110L520 180 600 210 635 205 620 150 660 70 595 15 530 45M490 110L480 200 500 270 490 320 480 440 545 540M500 260L540 280 585 330 600 300 640 380 670 400 690 460 725 520 735 560 755 650M660 70L710 170 760 160 810 120 830 190 835 260 810 300 770 310 755 360 750 420 720 510M810 120L800 20M840 200L870 190 930 260 920 300 940 330 940 440M755 360L830 385 860 350 900 370 940 440M855 190L860 140 950 70 940 0M950 100L970 170 930 230M970 170L1020 230 1060 240 1075 290 1110 270 1110 370 1040 380 1030 430 990 450 940 440M1060 210L1060 190 1105 180 1100 130 1080 60 1050 50 980 90M1100 130L1140 130 1155 90 1120 50 1130 0M1110 270L1150 205 1200 235 1235 350 1225 400 1170 385 1100 430 1060 460 1055 485 970 520M1200 235L1250 210 1255 170 1300 165 1310 200 1340 200M1250 210L1300 250 1340 200M1235 350L1280 340 1340 290 1400 262M1225 400L1250 440 1310 410 1410 405 1440 398M1240 440L1265 480 1305 500 1300 530 1270 560 1205 555 1170 520 1190 400M1205 555L1210 600M1000 540L1080 545 1120 500 1170 520M940 440L935 480 1000 540 985 600 990 650 1000 745M990 600L1030 600 1060 615 1140 605 1180 600 1260 590 1340 640 1355 600M725 530L780 530 840 490 850 460 890 440 940 460M755 650L850 655 880 680 990 655M880 680L890 710 860 720 830 780 880 800 910 830M890 710L910 780 940 800M755 650L740 680 740 740 660 770 665 840 650 870 710 885 735 860 760 880 825 855M740 740L735 860M725 750L715 720 650 650 670 600 665 550 680 510 720 510M665 550L605 580 565 545 550 595 470 590 450 610 410 600M650 650L650 700 620 740 555 800 550 860 530 870M320 380L350 385 360 430 410 480 450 470 545 550M410 480L415 600M345 270L380 350 410 370 440 460M410 370L415 300 410 220 375 190M420 330L440 290 460 310 480 230M355 210L345 270 310 350 320 400 290 450 310 500 345 490 410 500M310 500L300 530 240 560 225 610M240 560L265 580 280 620 330 640 405 615 415 690 380 700M280 620L260 655M405 615L410 690 460 770 500 800 530 870M330 640L350 690M350 800L400 770 440 770 430 810 390 820 370 850 325 855M380 855L390 915 425 920 450 865 490 870 530 890M530 870L520 920 430 970 430 1010 420 1030 450 1080 490 1110M550 870L600 855 640 890 700 960 745 990M520 920L600 960 640 970 700 960M540 940L520 1000 535 1070 605 1060 600 980M610 970L640 1000 620 1030 630 1080M610 960L700 885M800 950L870 840 910 850 840 985M890 840L825 835M1185 610L1185 640 1240 670M1085 850L1085 740 1140 720 1150 690 1170 730 1200 680 1220 770 1190 820 1185 905M1120 750L1120 870 1135 885M1170 730L1210 790M1200 680L1185 640M1220 770L1280 770 1270 700 1310 660 1220 700M1280 770L1310 710 1360 640M1280 780L1330 740 1365 660M1330 740L1340 770 1320 800 1330 850 1310 930M1340 770L1415 765M1240 20L1260 70 1300 100 1330 60 1340 30 1390 20M1330 60L1350 120 1300 100M1370 130L1375 70 1400 80M1000 540L970 520"/>
            <circle cx="1504" cy="1568" r="6"/>
          </g>
        </g>
      </svg>
      <div class="zoom"><b>+</b><b>−</b></div>
      <div class="attribution">Leaflet | Map data © OpenStreetMap contributors, CC-BY-SA</div>
      </div>
      <aside class="panel">
        <h2>Il territorio interessato</h2>
        <p class="intro">Seleziona un comune sulla mappa o cercalo per nome.</p>
        <div class="search"><span>Cerca il tuo comune</span><svg viewBox="0 0 28 28"><circle cx="11.500" cy="11.500" r="8.500"/><path d="M18 18l8 8"/></svg></div>
        <hr>
        <p>La mappa mostra una panoramica della cosiddetta <em>zona del cratere</em>, vale a dire<br>l'insieme dei 138 comuni colpiti dai terremoti del 2016 e 2017 nel Centro Italia, dal<br>comune di <a>Accumoli</a> a quello di <a>Visso</a>.</p>
        <p>Spostando il cursore su ognuno di essi puoi vederne il nome, mentre un click<br>mostrerà alcune informazioni di base del comune scelto e un link per aprire la pagina<br>di dettaglio dedicata.</p>
        <p>Puoi anche cercare direttamente per nome il comune di interesse usando il campo di<br>ricerca qui sopra. Esempio: <a>Amatrice</a>.</p>
      </aside>
    </div>

    <header class="site">
      <svg class="logo" viewBox="0 0 228 142"><path d="M37 5.500H102V71.500H37ZM4 138.500V38.500H69.500V138.500H102V105H37V138.500ZM122.500 5.500H220.500V38.500H188V138.500H155V72.500L122.500 41Z"/></svg>
      <div class="wordmark"><span>Ricostruzione</span><span class="two">Trasparente</span></div>
      <nav><a>PROGETTO</a><a>MAPPA</a><a>COSA PUOI FARE</a><a>CHI SIAMO</a><a>NEWSLETTER</a><a><b>€</b>SOSTIENI</a></nav>
    </header>
    <div class="wedge"></div>
    <div class="cookies">Privacy &amp; Cookies Policy</div>
    <div class="totop"><svg viewBox="0 0 18 11"><path d="M1.500 9.500L9 2l7.500 7.500"/></svg></div>
  </div>
</div>
<div class="edge"></div>
<div class="behind">
  <div class="wallpaper"></div><div class="bar"></div><div class="sheet-head"></div>
  <div class="rows"><s>u</s><s>u</s><s>u</s><s class="w">cit</s><s class="w">d c</s><s class="w">d c</s><s>u</s><s>u</s><s>u</s><s>u</s><s>u</s><s></s><s>u</s><s>u</s><s>u</s><s>u</s><s>u</s><s>u</s><s>u</s><s>u</s><s>u</s><s>u</s><s>u</s></div>
  <div class="rows second"><s class="w">d c</s><s class="w">d c</s><s>u</s><s>u</s><s>u</s><s>u</s><s></s><s>u</s><s>u</s><s>u</s><s class="w">d c</s></div>
  <div class="foot"></div><div class="foot last"></div>
</div>
</div>
</body>
</html>
```
FILE: styles.css
```css
* { box-sizing: border-box; }
body { margin: 0; background: #141414; }
p, h2 { margin: 0; }
.desktop { display: flex; width: 4096px; height: 2254px; overflow: hidden; font-family: "Open Sans", sans-serif; background: #1b1b1b; }
.window { width: 4074px; height: 2254px; display: flex; flex-direction: column; overflow: hidden; border-radius: 8px; background: #fff; }

.tabbar { height: 70px; background: #202123; border-bottom: 1px solid #131313; display: flex; align-items: flex-start; position: relative; }
.lights { display: flex; gap: 16px; padding: 22px 0 0 24px; width: 144px; }
.lights i { width: 24px; height: 24px; border-radius: 50%; background: #ec6a5e; }
.lights .yellow { background: #f4bf4f; }
.lights .green { background: #61c554; }
.tab { position: relative; width: 484px; height: 56px; margin-top: 14px; display: flex; align-items: center; padding: 0 32px; font-family: Inter, sans-serif; }
.tab-shape { position: absolute; inset: 0; width: 484px; height: 56px; fill: #505050; }
.favicon { position: relative; width: 32px; height: 32px; }
.tab-title { position: relative; margin-left: 13px; width: 350px; overflow: hidden; white-space: nowrap; font-size: 23.500px; line-height: 40px; font-weight: 500; color: #fff; letter-spacing: -.35px; }
.tab-title b { font-weight: 400; background: linear-gradient(90deg, #e8e8e8, #666); -webkit-background-clip: text; color: transparent; }
.tab-close { position: relative; width: 16px; height: 16px; margin-left: 7px; fill: none; stroke: #ddd; stroke-width: 2.200; }
.newtab { width: 58px; height: 29px; margin: 30px 0 0 0; background: #383838; clip-path: polygon(0 0, 82% 0, 100% 100%, 18% 100%); }
.incognito { width: 32px; height: 30px; margin: 19px 20px 0 auto; }

.toolbar { height: 74px; background: #505050; border-bottom: 2px solid #2b2d2d; display: flex; align-items: center; padding-left: 23px; }
.ico { width: 26px; height: 26px; margin-right: 30px; fill: none; stroke: #e2e2e2; stroke-width: 3; }
.ico .solid { fill: #e2e2e2; stroke: none; }
.ico.fwd { stroke: #808080; }
.ico.home { margin-right: 25px; }
.omnibox { width: 3759px; height: 54px; border: 1px solid #3c3c3c; border-radius: 6px; background: #606060; display: flex; align-items: center; font-family: Inter, sans-serif; color: #fff; font-size: 27px; }
.info { width: 28px; height: 28px; margin-left: 11px; fill: none; stroke: #fff; stroke-width: 2.800; }
.notsecure { margin-left: 9px; width: 146px; white-space: nowrap; font-weight: 500; letter-spacing: -.1px; }
.sep { width: 2px; height: 32px; background: #a0a0a0; margin: 0 12px; }
.url { color: #f4f4f4; white-space: nowrap; letter-spacing: .15px; }
.star { width: 30px; height: 28px; margin: 0 14px 0 auto; fill: none; stroke: #ddd; stroke-width: 2.800; }
.menu { display: flex; flex-direction: column; gap: 4px; margin-left: 34px; }
.menu i { width: 6px; height: 6px; border-radius: 50%; background: #ddd; }

.viewport { position: relative; height: 2110px; overflow: hidden; background: #fff; color: #333340; }
.lead { height: 93px; padding-left: 1786px; font-size: 35.900px; line-height: 32px; white-space: nowrap; }
.stats { display: grid; grid-template-columns: repeat(4, 585px); margin-left: 899px; height: 230px; }
.stat { display: flex; gap: 61px; }
.stat svg { width: 230px; height: 230px; fill: none; stroke: #000; stroke-width: 3.600; }
.stat .dot { fill: #000; stroke: none; }
.num { font-size: 64px; line-height: 92px; color: #9bc1c2; white-space: nowrap; }
.cap { margin-top: 27px; font-size: 32px; line-height: 48px; white-space: nowrap; }

.maprow { display: flex; margin-top: 249px; height: 1538px; }
.mapbox { position: relative; width: 2696px; height: 1538px; }
.map { display: block; width: 2696px; height: 1538px; }
.map path { vector-effect: non-scaling-stroke; }
.land { fill: #ededed; }
.sea path, .lakes path { fill: #c5c5c5; }
.lakes .trasimeno { fill: #bbc0ba; stroke: #b0bdb0; stroke-width: 3; }
.offshore path { fill: none; stroke: #b6b6b6; stroke-width: 1.600; stroke-dasharray: 6 6; }
.offshore .limit { stroke: #adadad; stroke-width: 3.500; stroke-dasharray: none; }
.parks path { fill: #e0e6df; stroke: #cbdac9; stroke-width: 2; stroke-dasharray: 5 4; }
.woods path { fill: #a5a5a5; }
.woods .faint { fill: #cdcdcd; }
.speckled { filter: url(#speck); }
.roads path { fill: none; stroke-linejoin: round; }
.minor path { stroke: #d3d3d3; stroke-width: 3; }
.mid path { stroke: #bababa; stroke-width: 3.800; }
.major path { stroke: #a3a3a3; stroke-width: 5.200; }
.labels text { font-family: "DejaVu Sans Condensed", "DejaVu Sans", sans-serif; font-stretch: condensed; font-size: 18px; text-anchor: middle; fill: #484848; stroke: #f2f2f2; stroke-width: 4px; stroke-linejoin: round; paint-order: stroke; }
.labels .city { font-size: 24px; fill: #444; }
.labels .park text { font-size: 16px; fill: #a2a6a2; }
.area path { fill: #9bc1c2; fill-opacity: .22; stroke: #9bc1c2; stroke-width: 7.500; stroke-linejoin: round; }
.line path { fill: none; stroke: #9bc1c2; stroke-width: 7.200; stroke-linejoin: round; stroke-linecap: round; }
.line circle { fill: #9bc1c2; stroke: #9bc1c2; stroke-width: 6; }

.zoom { position: absolute; left: 20px; top: 20px; width: 68px; border: 4px solid rgba(0, 0, 0, .25); border-radius: 8px; display: flex; flex-direction: column; background-clip: padding-box; background-color: #fff; }
.zoom b { height: 60px; padding-top: 8px; display: flex; align-items: center; justify-content: center; font: bold 42px/52px "Liberation Sans", sans-serif; color: #333340; }
.zoom b:first-child { border-bottom: 2px solid #ccc; }
.attribution { position: absolute; right: 0; top: 0; width: 624px; height: 31px; padding-left: 10px; background: rgba(255, 255, 255, .7); font: 22px/32px "Liberation Sans", sans-serif; letter-spacing: .14px; white-space: nowrap; color: #333340; }

.panel { padding: 24px 0 0 60px; width: 1378px; font-size: 32px; line-height: 48px; white-space: nowrap; }
.panel h2 { font: 400 48px/60px Roboto, sans-serif; color: #222; }
.panel p { margin-bottom: 24px; }
.panel .intro { margin-top: 42px; }
.panel a { border-bottom: 4px solid #9bc1c2; display: inline-block; line-height: 38px; }
.search { width: 1286px; height: 72px; background: #9bc1c2; display: flex; align-items: center; justify-content: space-between; padding: 0 23px 0 25px; font-style: italic; color: #4f5a5c; }
.search svg { width: 28px; height: 28px; margin-top: 6px; fill: none; stroke: #fff; stroke-width: 4.500; }
.panel hr { width: 1288px; height: 3px; border: 0; background: #eaeaea; margin: 48px 0 47px; }

.site { position: absolute; left: 0; top: 0; width: 4074px; height: 150px; display: flex; align-items: flex-start; background: linear-gradient(rgba(155, 193, 194, .93) 142px, rgba(155, 193, 194, .37) 142px); }
.logo { width: 228px; height: 142px; margin-left: 906px; fill: none; stroke: #222; stroke-width: 7; flex: none; }
.wordmark { margin: 55px 0 0 -4px; display: flex; flex-direction: column; align-items: flex-start; font: 500 25px/38px Roboto, sans-serif; letter-spacing: 3.100px; color: #fff; }
.wordmark span { display: block; background: #222021; width: 212px; height: 39px; padding-left: 10px; line-height: 43px; }
.wordmark .two { width: 190px; line-height: 35px; }
.site nav { margin: 49px 0 0 459px; display: flex; gap: 60px; font-size: 32px; line-height: 46px; white-space: nowrap; color: #2f323e; }
.site nav b { color: #fff; font-weight: 800; margin-right: 8px; }

.wedge { position: absolute; left: 0; bottom: 0; width: 4074px; height: 122px; background: #9bc1c2; clip-path: polygon(0 0, 100% 121px, 100% 100%, 0 100%); }
.cookies { position: absolute; left: 3532px; bottom: 0; width: 342px; height: 48px; border: 2px solid #444; border-bottom: 0; background: #fff; color: #000; text-align: center; font-size: 26.700px; line-height: 46px; white-space: nowrap; }
.totop { position: absolute; left: 3968px; top: 2014px; width: 82px; height: 72px; background: #9bc1c2; clip-path: polygon(24% 0, 76% 0, 100% 50%, 76% 100%, 24% 100%, 0 50%); display: flex; align-items: center; justify-content: center; }
.totop svg { width: 18px; height: 11px; margin-top: 4px; fill: none; stroke: #fff; stroke-width: 2.600; }

.edge { width: 6px; background: #c4c4c4; border-left: 1px solid #8c8c8c; border-radius: 0 6px 8px 0; }
.behind { width: 16px; height: 2240px; overflow: hidden; background: linear-gradient(90deg, #909090, #c2c2c2); font: 20px/32px "DejaVu Sans", sans-serif; color: #111; }
.wallpaper { height: 96px; background: linear-gradient(#6b9a7c, #4f7462); border-bottom: 2px solid #48695a; }
.bar { height: 142px; border-bottom: 2px solid #8d8d8d; }
.sheet-head { height: 519px; border-bottom: 2px solid #8a8a8a; }
.rows { display: flex; flex-direction: column; }
.rows s { display: block; height: 32px; border-bottom: 2px solid #9c9c9c; padding-left: 4px; text-decoration: none; white-space: nowrap; overflow: hidden; }
.rows .w { padding-left: 0; text-indent: -4px; }
.second { margin-top: 282px; }
.foot { height: 16px; border-bottom: 2px solid #929292; }
.foot.last { height: 52px; }
```
